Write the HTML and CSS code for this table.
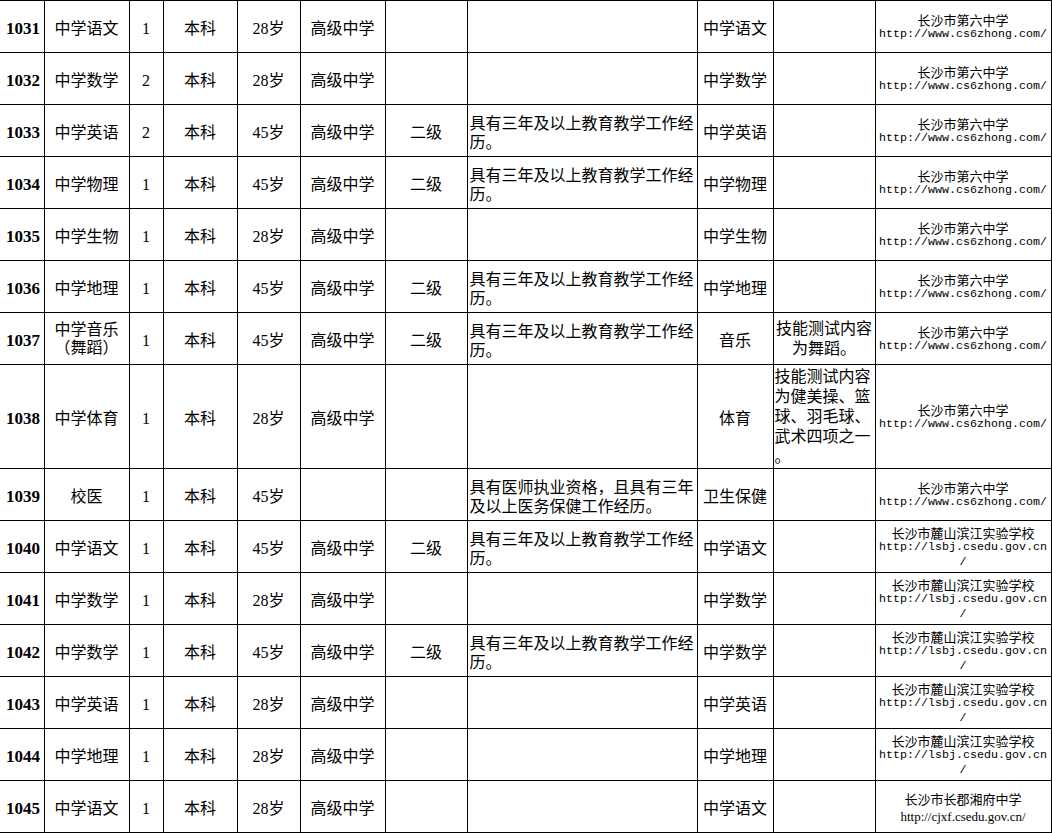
FILE: index.html
```html
<!DOCTYPE html>
<html lang="zh-CN">
<head>
<meta charset="utf-8">
<title>岗位表</title>
<link rel="stylesheet" href="styles.css">
</head>
<body>
<table class="jobs">
  <colgroup>
    <col class="c-id"><col class="c-subj"><col class="c-num"><col class="c-deg"><col class="c-age"><col class="c-lvl"><col class="c-title"><col class="c-req"><col class="c-major"><col class="c-note"><col class="c-school">
  </colgroup>
  <tbody>
    <tr>
      <td class="id">1031</td><td>中学语文</td><td>1</td><td>本科</td><td>28岁</td><td>高级中学</td><td></td><td class="req"></td><td>中学语文</td><td></td>
      <td class="school"><span class="sname">长沙市第六中学</span><span class="url">http://www.cs6zhong.com/</span></td>
    </tr>
    <tr>
      <td class="id">1032</td><td>中学数学</td><td>2</td><td>本科</td><td>28岁</td><td>高级中学</td><td></td><td class="req"></td><td>中学数学</td><td></td>
      <td class="school"><span class="sname">长沙市第六中学</span><span class="url">http://www.cs6zhong.com/</span></td>
    </tr>
    <tr>
      <td class="id">1033</td><td>中学英语</td><td>2</td><td>本科</td><td>45岁</td><td>高级中学</td><td>二级</td><td class="req">具有三年及以上教育教学工作经<br>历。</td><td>中学英语</td><td></td>
      <td class="school"><span class="sname">长沙市第六中学</span><span class="url">http://www.cs6zhong.com/</span></td>
    </tr>
    <tr>
      <td class="id">1034</td><td>中学物理</td><td>1</td><td>本科</td><td>45岁</td><td>高级中学</td><td>二级</td><td class="req">具有三年及以上教育教学工作经<br>历。</td><td>中学物理</td><td></td>
      <td class="school"><span class="sname">长沙市第六中学</span><span class="url">http://www.cs6zhong.com/</span></td>
    </tr>
    <tr>
      <td class="id">1035</td><td>中学生物</td><td>1</td><td>本科</td><td>28岁</td><td>高级中学</td><td></td><td class="req"></td><td>中学生物</td><td></td>
      <td class="school"><span class="sname">长沙市第六中学</span><span class="url">http://www.cs6zhong.com/</span></td>
    </tr>
    <tr>
      <td class="id">1036</td><td>中学地理</td><td>1</td><td>本科</td><td>45岁</td><td>高级中学</td><td>二级</td><td class="req">具有三年及以上教育教学工作经<br>历。</td><td>中学地理</td><td></td>
      <td class="school"><span class="sname">长沙市第六中学</span><span class="url">http://www.cs6zhong.com/</span></td>
    </tr>
    <tr>
      <td class="id">1037</td><td class="two">中学音乐<br>（舞蹈）</td><td>1</td><td>本科</td><td>45岁</td><td>高级中学</td><td>二级</td><td class="req">具有三年及以上教育教学工作经<br>历。</td><td>音乐</td><td class="note">技能测试内容<br>为舞蹈。</td>
      <td class="school"><span class="sname">长沙市第六中学</span><span class="url">http://www.cs6zhong.com/</span></td>
    </tr>
    <tr class="tall">
      <td class="id">1038</td><td>中学体育</td><td>1</td><td>本科</td><td>28岁</td><td>高级中学</td><td></td><td class="req"></td><td>体育</td><td class="note left">技能测试内容<br>为健美操、篮<br>球、羽毛球、<br>武术四项之一<br>。</td>
      <td class="school"><span class="sname">长沙市第六中学</span><span class="url">http://www.cs6zhong.com/</span></td>
    </tr>
    <tr>
      <td class="id">1039</td><td>校医</td><td>1</td><td>本科</td><td>45岁</td><td></td><td></td><td class="req">具有医师执业资格，且具有三年<br>及以上医务保健工作经历。</td><td>卫生保健</td><td></td>
      <td class="school"><span class="sname">长沙市第六中学</span><span class="url">http://www.cs6zhong.com/</span></td>
    </tr>
    <tr>
      <td class="id">1040</td><td>中学语文</td><td>1</td><td>本科</td><td>45岁</td><td>高级中学</td><td>二级</td><td class="req">具有三年及以上教育教学工作经<br>历。</td><td>中学语文</td><td></td>
      <td class="school"><span class="sname">长沙市麓山滨江实验学校</span><span class="url">http://lsbj.csedu.gov.cn<br>/</span></td>
    </tr>
    <tr>
      <td class="id">1041</td><td>中学数学</td><td>1</td><td>本科</td><td>28岁</td><td>高级中学</td><td></td><td class="req"></td><td>中学数学</td><td></td>
      <td class="school"><span class="sname">长沙市麓山滨江实验学校</span><span class="url">http://lsbj.csedu.gov.cn<br>/</span></td>
    </tr>
    <tr>
      <td class="id">1042</td><td>中学数学</td><td>1</td><td>本科</td><td>45岁</td><td>高级中学</td><td>二级</td><td class="req">具有三年及以上教育教学工作经<br>历。</td><td>中学数学</td><td></td>
      <td class="school"><span class="sname">长沙市麓山滨江实验学校</span><span class="url">http://lsbj.csedu.gov.cn<br>/</span></td>
    </tr>
    <tr>
      <td class="id">1043</td><td>中学英语</td><td>1</td><td>本科</td><td>28岁</td><td>高级中学</td><td></td><td class="req"></td><td>中学英语</td><td></td>
      <td class="school"><span class="sname">长沙市麓山滨江实验学校</span><span class="url">http://lsbj.csedu.gov.cn<br>/</span></td>
    </tr>
    <tr>
      <td class="id">1044</td><td>中学地理</td><td>1</td><td>本科</td><td>28岁</td><td>高级中学</td><td></td><td class="req"></td><td>中学地理</td><td></td>
      <td class="school"><span class="sname">长沙市麓山滨江实验学校</span><span class="url">http://lsbj.csedu.gov.cn<br>/</span></td>
    </tr>
    <tr>
      <td class="id">1045</td><td>中学语文</td><td>1</td><td>本科</td><td>28岁</td><td>高级中学</td><td></td><td class="req"></td><td>中学语文</td><td></td>
      <td class="school"><span class="sname">长沙市长郡湘府中学</span><span class="url serif">http://cjxf.csedu.gov.cn/</span></td>
    </tr>
  </tbody>
</table>
</body>
</html>
```

FILE: styles.css
```css
html, body {
  margin: 0;
  padding: 0;
  background: #ffffff;
}

.jobs {
  border-collapse: collapse;
  table-layout: fixed;
  width: 1051px;
  font-family: "Liberation Serif", "Noto Sans CJK SC", serif;
  font-size: 16px;
  color: #000;
}

.c-id { width: 44px; }
.c-subj { width: 85px; }
.c-num { width: 34px; }
.c-deg { width: 74px; }
.c-age { width: 63px; }
.c-lvl { width: 85px; }
.c-title { width: 82px; }
.c-req { width: 230px; }
.c-major { width: 76px; }
.c-note { width: 102px; }
.c-school { width: 176px; }

.jobs tr {
  height: 52px;
}

.jobs tr.tall {
  height: 104px;
}

.jobs td {
  border: 1px solid #000;
  padding: 3px 2px 0;
  text-align: center;
  vertical-align: middle;
  line-height: 19px;
  white-space: nowrap;
  overflow: hidden;
}

.jobs td:first-child {
  border-left: none;
}

.jobs td.id {
  font-weight: bold;
  font-size: 17px;
  padding: 3px 0 0 6px;
  text-align: left;
}

.jobs td.two {
  line-height: 18px;
  padding-top: 0;
}

.jobs td.req {
  text-align: left;
  padding: 5px 1px 0 2px;
}

.jobs td.note {
  line-height: 20px;
  padding: 0 1px;
}

.jobs td.note.left {
  text-align: left;
}

.jobs td.school {
  padding: 1px 0 0;
  line-height: 15px;
}

.sname {
  display: block;
  font-family: "Noto Sans CJK SC", sans-serif;
  font-size: 13px;
}

.url {
  display: block;
  font-family: "Liberation Mono", monospace;
  font-size: 11.67px;
}

.url.serif {
  font-family: "Liberation Serif", serif;
  font-size: 13px;
  margin-top: 3px;
}
```
